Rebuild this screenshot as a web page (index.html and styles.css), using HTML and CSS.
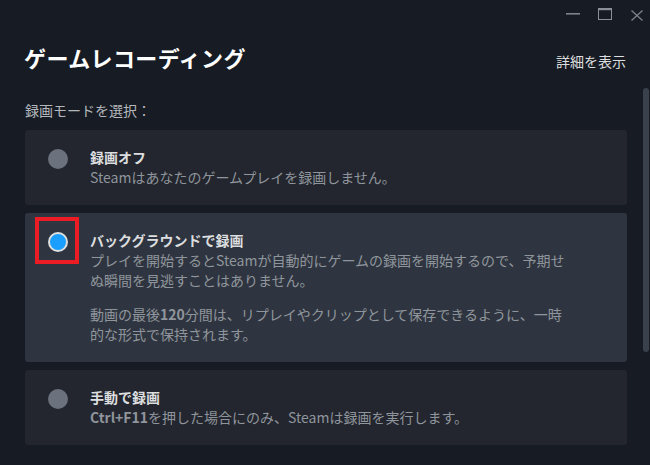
FILE: index.html
```html
<!DOCTYPE html>
<html lang="ja">
<head>
<meta charset="utf-8">
<title>ゲームレコーディング</title>
<link rel="stylesheet" href="styles.css">
</head>
<body>
<div class="window">
  <div class="titlebar">
    <span class="wc wc-min"><svg width="14" height="14" viewBox="0 0 14 14"><rect x="0" y="6" width="14" height="1.6" fill="#7d838b"/></svg></span>
    <span class="wc wc-max"><svg width="14" height="12" viewBox="0 0 14 12"><rect x="0.5" y="0.5" width="13" height="11" fill="none" stroke="#8a9098" stroke-width="1"/><rect x="0" y="0" width="14" height="2.2" fill="#8a9098"/></svg></span>
    <span class="wc wc-close"><svg width="12" height="11" viewBox="0 0 12 11"><path d="M0.5 0.5 L11.5 10.5 M11.5 0.5 L0.5 10.5" stroke="#7d838b" stroke-width="1.3" fill="none"/></svg></span>
  </div>
  <div class="content">
    <div class="header">
      <h1 class="title">ゲームレコーディング</h1>
      <a class="details">詳細を表示</a>
    </div>
    <div class="subtitle">録画モードを選択：</div>
    <div class="options">
      <div class="card">
        <div class="radio-wrap"><span class="radio"></span></div>
        <div class="text">
          <div class="card-title">録画オフ</div>
          <p class="desc">Steamはあなたのゲームプレイを録画しません。</p>
        </div>
      </div>
      <div class="card selected">
        <div class="radio-wrap"><span class="radio on"></span><span class="highlight"></span></div>
        <div class="text">
          <div class="card-title">バックグラウンドで録画</div>
          <p class="desc">プレイを開始するとSteamが自動的にゲームの録画を開始するので、予期せぬ瞬間を見逃すことはありません。</p>
          <p class="desc para">動画の最後<b>120</b>分間は、リプレイやクリップとして保存できるように、一時的な形式で保持されます。</p>
        </div>
      </div>
      <div class="card">
        <div class="radio-wrap"><span class="radio"></span></div>
        <div class="text">
          <div class="card-title">手動で録画</div>
          <p class="desc"><b>Ctrl+F11</b>を押した場合にのみ、Steamは録画を実行します。</p>
        </div>
      </div>
    </div>
  </div>
  <div class="scroll-thumb"></div>
</div>
</body>
</html>
```

FILE: styles.css
```css
* { box-sizing: border-box; }
html, body {
  margin: 0;
  padding: 0;
  background: #171b23;
}
body {
  width: 650px;
  height: 465px;
  overflow: hidden;
  font-family: "Noto Sans CJK JP", "Noto Sans", sans-serif;
  color: #dcdedf;
}
.window {
  position: relative;
  width: 650px;
  height: 465px;
  background: #171b23;
}
.titlebar {
  display: flex;
  justify-content: flex-end;
  align-items: flex-start;
  height: 30px;
  padding-top: 8px;
  padding-right: 7px;
}
.wc {
  display: flex;
  align-items: center;
  justify-content: center;
  height: 12px;
}
.wc-min { width: 14px; margin-right: 18px; }
.wc-max { width: 14px; margin-right: 19px; }
.wc-close { width: 12px; margin-top: 1px; }
.content {
  padding: 0 23px 0 25px;
}
.header {
  display: flex;
  justify-content: space-between;
  align-items: baseline;
  margin-top: 12px;
}
.title {
  margin: 0 0 0 -1px;
  font-size: 22px;
  line-height: 30px;
  font-weight: 700;
  color: #ffffff;
  letter-spacing: 0.4px;
}
.details {
  font-size: 14px;
  color: #dcdedf;
  cursor: pointer;
  margin-right: 1px;
}
.subtitle {
  margin-top: 28px;
  font-size: 14px;
  line-height: 20px;
  color: #b4b8bd;
}
.options {
  display: flex;
  flex-direction: column;
  gap: 8px;
  margin-top: 10px;
}
.card {
  display: flex;
  align-items: flex-start;
  gap: 22px;
  padding: 17px 20px 18px 23px;
  background: #23262e;
  border-radius: 3px;
}
.card.selected {
  background: #2f3540;
}
.radio-wrap {
  position: relative;
  flex: none;
  width: 20px;
  height: 20px;
  margin-top: 2px;
}
.radio {
  display: block;
  width: 20px;
  height: 20px;
  border-radius: 50%;
  background: #6b717d;
}
.radio.on {
  background: #1a9fff;
  border: 2px solid #dcdedf;
}
.highlight {
  position: absolute;
  left: -13px;
  top: -15px;
  width: 44px;
  height: 47px;
  border: 4px solid #ec1c24;
}
.text {
  flex: 1;
}
.card-title {
  font-size: 14px;
  line-height: 20px;
  font-weight: 700;
  color: #dcdedf;
}
.desc {
  margin: 0;
  max-width: 482px;
  font-size: 14px;
  line-height: 20px;
  color: #8f959c;
}
.desc b {
  font-weight: 700;
}
.desc.para {
  margin-top: 14px;
}
.scroll-thumb {
  position: absolute;
  left: 643px;
  top: 88px;
  width: 6px;
  height: 264px;
  border-radius: 3px;
  background: #3b414c;
}
```
